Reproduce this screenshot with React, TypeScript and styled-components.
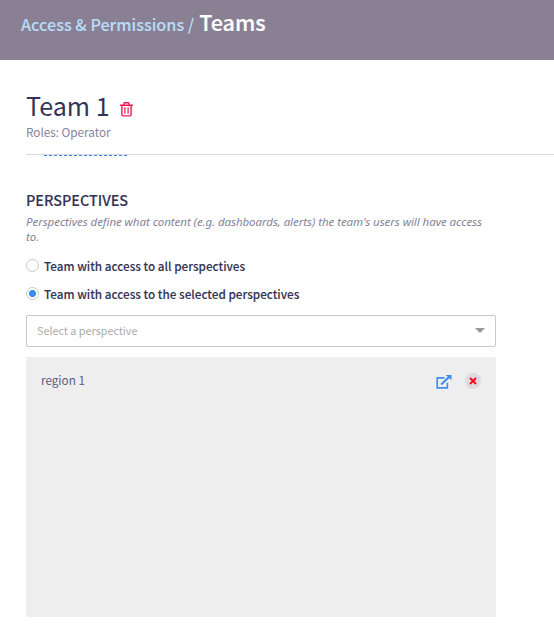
import React from "react";
import styled, { createGlobalStyle } from "styled-components";

const Global = createGlobalStyle`
  * { box-sizing: border-box; }
  body {
    margin: 0;
    background: #fff;
    color: #343454;
    font-family: "Noto Sans CJK SC", "Noto Sans", sans-serif;
    overflow: hidden;
  }
`;

const Header = styled.header`
  height: 60px;
  padding: 5px 21px 0;
  background: #8a8094;
  display: flex;
  align-items: baseline;
  line-height: 34px;
  white-space: nowrap;
`;
const Crumb = styled.a`
  color: #b9dcf8;
  font-size: 16.2px;
  font-weight: 500;
  margin-right: 5px;
  -webkit-text-stroke: 0.1px;
`;
const Current = styled.h1`
  margin: 0;
  color: #fff;
  font-size: 21.6px;
  font-weight: 500;
  -webkit-text-stroke: 0.15px;
`;

const TeamHeader = styled.section`
  height: 95px;
  margin-left: 26px;
  padding-top: 28px;
  border-bottom: 1px solid #d8d8de;
`;
const TitleRow = styled.div`
  display: flex;
  align-items: center;
  height: 36px;

  svg { margin-top: 7px; }
`;
const TeamName = styled.h2`
  margin: -2px 10px 0 0;
  font-size: 25.1px;
  line-height: 36px;
  font-weight: 400;
`;
const Roles = styled.p`
  margin: 0;
  font-size: 11.72px;
  line-height: 16px;
  color: #85839a;
`;
const TabMarker = styled.div`
  width: 83px;
  margin-left: 44px;
  border-top: 1px dashed #3a86dc;
`;

const Content = styled.main`
  width: 470px;
  margin: 34px 0 0 26px;
`;
const SectionTitle = styled.h3`
  margin: 0;
  font-size: 14.4px;
  line-height: 20px;
  font-weight: 500;
  -webkit-text-stroke: 0.1px;
`;
const Description = styled.p`
  margin: 4px 0 13px;
  font-family: "Noto Sans", sans-serif;
  font-style: italic;
  font-size: 11.52px;
  letter-spacing: -0.06px;
  line-height: 15px;
  color: #85839a;
`;
const Option = styled.div`
  display: flex;
  align-items: center;
  height: 16px;
  margin-bottom: 12px;
  font-size: 11.72px;
  font-weight: 500;
  white-space: nowrap;
  -webkit-text-stroke: 0.1px;
`;
const Radio = styled.span<{ $checked?: boolean }>`
  width: 13px;
  height: 13px;
  margin: 0 5px 0 0;
  border: 1px solid #c8c8c8;
  border-radius: 50%;
  background: ${(p) => (p.$checked ? "radial-gradient(circle, #3b8df0 3.2px, #fff 3.9px)" : "#fff")};
`;
const Select = styled.div`
  display: flex;
  align-items: center;
  justify-content: space-between;
  height: 32px;
  margin-top: 14px;
  padding: 0 10px 2px;
  border: 1px solid #c8c8c8;
  border-radius: 2px;
  font-size: 10.8px;
  color: #aaa;
`;
const Caret = styled.span`
  border: 5px solid transparent;
  border-top-color: #999;
  border-bottom: 0;
`;
const List = styled.div`
  height: 260px;
  margin-top: 10px;
  padding: 14px 15px;
  background: #eee;
`;
const Item = styled.div`
  display: flex;
  align-items: center;
  height: 17px;
  color: #5b5b80;
  font-size: 11.7px;
`;
const Actions = styled.div`
  display: flex;
  align-items: center;
  gap: 13px;
  margin: 3px 0 0 auto;

  > svg { margin-top: 2px; }
`;
const Remove = styled.span`
  display: flex;
  align-items: center;
  justify-content: center;
  width: 16px;
  height: 16px;
  border-radius: 50%;
  background: #dcdce0;
`;

const TrashIcon = () => (
  <svg width="13" height="15" viewBox="0 0 13 15" fill="none" stroke="#ed1c50" strokeWidth="1.4">
    <path d="M0 3.2H13M3.6 3L4.5 .8H8.5L9.4 3M1.9 3.4V12.6Q1.9 13.9 3.2 13.9H9.8Q11.1 13.9 11.1 12.6V3.4" />
    <path d="M4.9 5.3V11.7M8.1 5.3V11.7" strokeWidth="1.2" />
  </svg>
);
const OpenIcon = () => (
  <svg width="16" height="14" viewBox="0 0 16 14" fill="none" stroke="#3b8df0">
    <path d="M8.5 2.9H1.2V12.9H11.4V7.8" strokeWidth="1.6" />
    <path d="M5.2 9.4L13 2" strokeWidth="2.1" />
    <path d="M9.8 0H15.5V5.3Z" fill="#3b8df0" stroke="none" />
  </svg>
);

export default function App() {
  return (
    <>
      <Global />
      <Header>
        <Crumb>Access &amp; Permissions /</Crumb>
        <Current>Teams</Current>
      </Header>
      <TeamHeader>
        <TitleRow>
          <TeamName>Team 1</TeamName>
          <TrashIcon />
        </TitleRow>
        <Roles>Roles: Operator</Roles>
      </TeamHeader>
      <TabMarker />
      <Content>
        <SectionTitle>PERSPECTIVES</SectionTitle>
        <Description>
          Perspectives define what content (e.g. dashboards, alerts) the team's users will have access to.
        </Description>
        <Option><Radio />Team with access to all perspectives</Option>
        <Option><Radio $checked />Team with access to the selected perspectives</Option>
        <Select>Select a perspective<Caret /></Select>
        <List>
          <Item>
            region 1
            <Actions>
              <OpenIcon />
              <Remove>
                <svg width="8" height="8" viewBox="0 0 8 8" stroke="#ff0010" strokeWidth="1.8">
                  <path d="M1 1L7 7M7 1L1 7" />
                </svg>
              </Remove>
            </Actions>
          </Item>
        </List>
      </Content>
    </>
  );
}
